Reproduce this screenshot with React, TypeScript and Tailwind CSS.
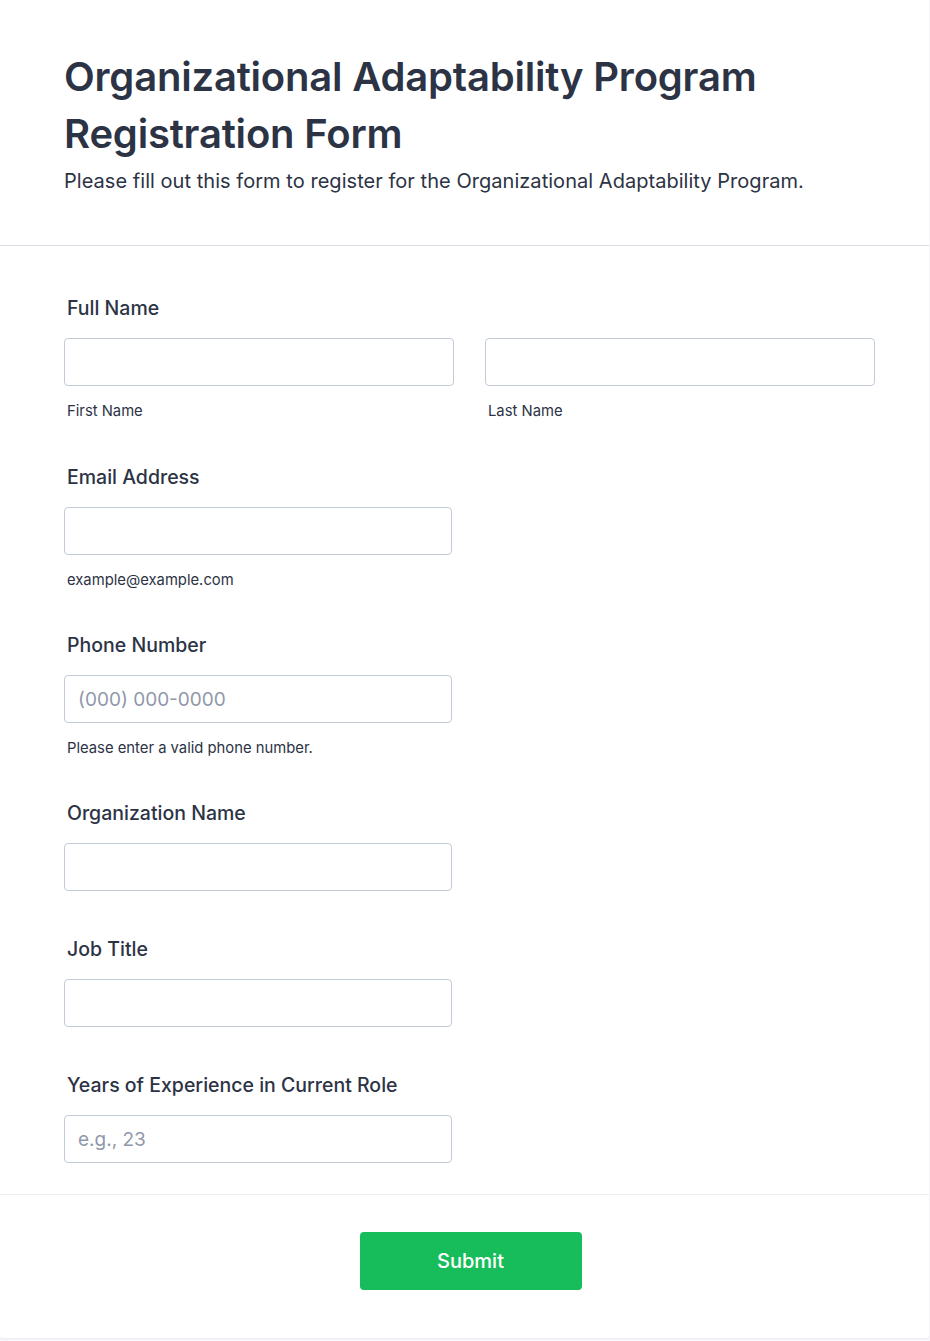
import { useState } from 'react';

interface Field {
  id: string;
  label: string;
  placeholder?: string;
  hint?: string;
}

const fields: Field[] = [
  { id: 'email', label: 'Email Address', hint: 'example@example.com' },
  { id: 'phone', label: 'Phone Number', placeholder: '(000) 000-0000', hint: 'Please enter a valid phone number.' },
  { id: 'org', label: 'Organization Name' },
  { id: 'job', label: 'Job Title' },
  { id: 'years', label: 'Years of Experience in Current Role', placeholder: 'e.g., 23' },
];

const inputClass =
  'h-12 w-full rounded-[4px] border border-[#c3cad8] bg-white px-[13px] text-[19px] text-[#2c3345] placeholder:text-[#8f98aa] outline-none focus:border-[#2e69ff]';

export default function App() {
  const [values, setValues] = useState<Record<string, string>>({});

  const update = (id: string, value: string) => setValues({ ...values, [id]: value });

  return (
    <main className="min-h-screen bg-[#f7f7fb] font-['Inter',sans-serif] text-[#2c3345]">
      <div className="mr-px rounded-b-[3px] bg-white shadow-[0_1px_2px_rgba(40,40,80,0.06)]">
        {/* Header */}
        <div className="border-b border-[#dcdce6] px-16 pt-[48px] pb-[50px]">
          <h1 className="text-[40px] font-semibold leading-[57px] tracking-[-0.2px] text-[#2c3345]">
            Organizational Adaptability Program Registration Form
          </h1>
          <p className="mt-[5px] text-[20px] leading-[28px] tracking-[0.04px] text-[#2c3345]">
            Please fill out this form to register for the Organizational Adaptability Program.
          </p>
        </div>

        {/* Fields */}
        <div className="px-16 pt-[48px] pb-[31px]">
          <div className="mb-[41px]">
            <label className="block px-[3px] text-[19.5px] font-medium leading-[28px]">Full Name</label>
            <div className="mt-4 grid w-[811px] grid-cols-2 gap-[31px]">
              <div>
                <input
                  className={inputClass}
                  value={values.first ?? ''}
                  onChange={(e) => update('first', e.target.value)}
                />
                <p className="mt-[14px] px-[3px] text-[14.8px] leading-[22px]">First Name</p>
              </div>
              <div>
                <input
                  className={inputClass}
                  value={values.last ?? ''}
                  onChange={(e) => update('last', e.target.value)}
                />
                <p className="mt-[14px] px-[3px] text-[14.8px] leading-[22px]">Last Name</p>
              </div>
            </div>
          </div>

          {fields.map((f, i) => (
            <div
              key={f.id}
              className={i === fields.length - 1 ? '' : f.hint ? 'mb-[40px]' : 'mb-[44px]'}
            >
              <label className="block px-[3px] text-[19.5px] font-medium leading-[28px]">{f.label}</label>
              <div className="mt-4 w-[388px]">
                <input
                  className={inputClass}
                  placeholder={f.placeholder}
                  value={values[f.id] ?? ''}
                  onChange={(e) => update(f.id, e.target.value)}
                />
              </div>
              {f.hint && <p className="mt-[14px] px-[3px] text-[14.8px] leading-[22px]">{f.hint}</p>}
            </div>
          ))}
        </div>

        {/* Submit */}
        <div className="flex justify-center border-t border-[#ededf3] pt-[37px] pb-[48px] pl-3">
          <button className="h-[58px] w-[222px] rounded-[4px] bg-[#18bd5b] text-[20px] font-medium text-white hover:bg-[#16aa52]">
            Submit
          </button>
        </div>
      </div>
    </main>
  );
}
